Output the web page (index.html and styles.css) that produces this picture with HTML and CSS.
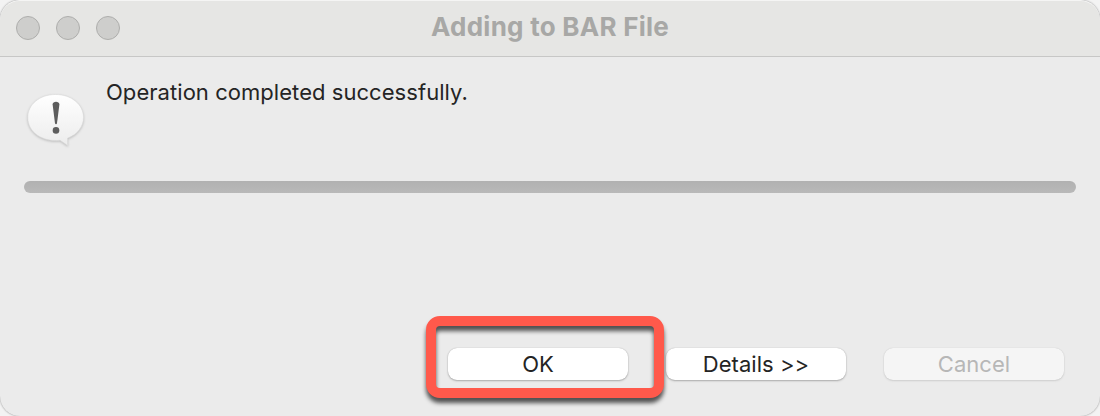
FILE: index.html
```html
<!DOCTYPE html>
<html lang="en">
<head>
<meta charset="utf-8">
<title>Adding to BAR File</title>
<link rel="stylesheet" href="styles.css">
</head>
<body>
<main class="dialog">
  <header class="titlebar">
    <div class="controls"><span class="control"></span><span class="control"></span><span class="control"></span></div>
    <h1 class="title">Adding to BAR File</h1>
  </header>
  <section class="message">
    <svg class="bubble" width="64" height="60" viewBox="0 0 64 60">
      <defs>
        <linearGradient id="fill" x1="0" y1="0" x2="0" y2="1">
          <stop offset="0" stop-color="#ffffff"/>
          <stop offset="1" stop-color="#ececec"/>
        </linearGradient>
      </defs>
      <path class="bubble-shape" fill="url(#fill)" d="M31.500 4.500C47.500 4.500 59.500 14.500 59.500 27.500C59.500 36.500 53.500 44.500 43.500 48.200L43.700 55.500L36 50.300C18 52.200 3.800 42 3.800 27.500C3.800 14.500 15.500 4.500 31.500 4.500Z"/>
      <path class="mark" d="M28.600 14.500C28.600 10.700 35.400 10.700 35.400 14.500L33 33.200C32.800 34.700 31.200 34.700 31 33.200Z"/>
      <circle class="mark" cx="32" cy="40.400" r="3.300"/>
    </svg>
    <p class="text">Operation completed successfully.</p>
  </section>
  <div class="progress"></div>
  <footer class="actions">
    <div class="ok-wrap"><button class="button">OK</button><span class="highlight"></span></div>
    <button class="button">Details &gt;&gt;</button>
    <button class="button disabled" disabled>Cancel</button>
  </footer>
</main>
</body>
</html>
```
FILE: styles.css
```css
* { box-sizing: border-box; }
body {
  margin: 0;
  background: #f3f3f3;
  font-family: Inter, "Liberation Sans", sans-serif;
}
.dialog {
  display: flex;
  flex-direction: column;
  width: 1100px;
  height: 416px;
  overflow: hidden;
  background: #ebebeb;
  border-radius: 20px;
  box-shadow: 0 0 2px #888;
}
.titlebar {
  display: grid;
  grid-template-columns: 1fr auto 1fr;
  align-items: center;
  height: 57px;
  flex: none;
  padding: 0 16px 1px;
  background: #e6e6e4;
  border-top: 1px solid #f5f5f4;
  border-bottom: 1px solid #c7c7c6;
  border-radius: 20px 20px 0 0;
}
.controls { display: flex; gap: 16px; }
.control {
  width: 24px;
  height: 24px;
  border: 1px solid #aeaeac;
  border-radius: 50%;
  background: #cececc;
}
.title {
  margin: 0 0 2px;
  color: #a8a8a6;
  font-size: 26px;
  font-weight: 700;
  line-height: 32px;
  letter-spacing: .25px;
}
.message {
  display: flex;
  height: 124px;
  flex: none;
  padding: 21px 24px 0;
}
.bubble { flex: none; margin-top: 12px; }
.bubble-shape { stroke: #dadada; stroke-width: .6; filter: drop-shadow(0 1px 1px #bdbdbd); }
.mark { fill: #5d5d5d; }
.text {
  margin: 0 0 0 18px;
  color: #242424;
  font-size: 22px;
  line-height: 28px;
  letter-spacing: .05px;
}
.progress {
  height: 12px;
  flex: none;
  margin: 0 24px;
  border-radius: 6px;
  background: linear-gradient(#b1b1b1, #b9b9b9);
}
.actions {
  display: flex;
  justify-content: flex-end;
  gap: 38px;
  margin-top: auto;
  padding: 0 36px 36px 0;
}
.button {
  width: 180px;
  height: 32px;
  padding: 0;
  border: 0;
  border-radius: 9px;
  background: #fff;
  color: #242424;
  box-shadow: 0 0 1px #aaa, 0 1px 2px #aaa;
  font: 22px/32px Inter, "Liberation Sans", sans-serif;
  letter-spacing: .05px;
}
.disabled { background: #f5f5f5; color: #b7b7b7; box-shadow: 0 0 1px #c4c4c4, 0 1px 2px #cecece; }
.ok-wrap { position: relative; height: 32px; }
.highlight {
  position: absolute;
  left: -22px;
  top: -32px;
  width: 238px;
  height: 82px;
  border: 10px solid #ff594b;
  border-radius: 14px;
  filter: drop-shadow(0 5px 2px rgba(0, 0, 0, .65));
  pointer-events: none;
}
```
